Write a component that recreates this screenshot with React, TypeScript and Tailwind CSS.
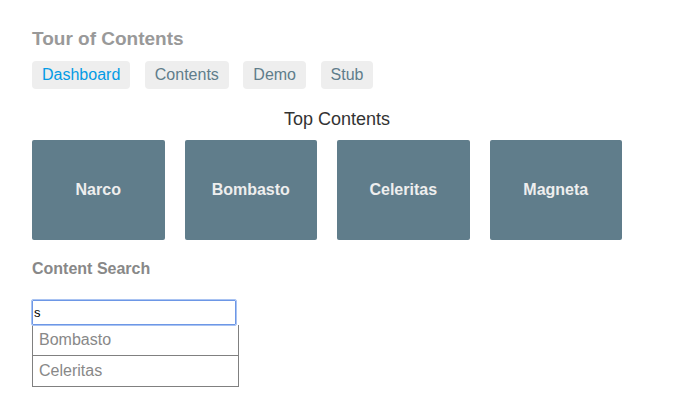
import { useState } from 'react';

const navLinks = ['Dashboard', 'Contents', 'Demo', 'Stub'];
const topContents = ['Narco', 'Bombasto', 'Celeritas', 'Magneta'];
const allContents = ['Narco', 'Bombasto', 'Celeritas', 'Magneta', 'RubberMan', 'Dynama', 'Dr IQ', 'Magma', 'Tornado'];

export default function App() {
  const [term, setTerm] = useState('s');

  // 検索語を含むもの（先頭2件だけ表示）
  const results = term
    ? allContents.filter((name) => name.toLowerCase().includes(term.toLowerCase()) && name !== 'Magneta').slice(0, 2)
    : [];

  return (
    <div className="min-h-[399px] bg-white pl-8 pr-[31px] pt-[28px] font-['Liberation_Sans',Arial,sans-serif]">
      <h1 className="text-[19px] leading-[22px] font-bold text-[#999]">Tour of Contents</h1>

      {/* ナビゲーション */}
      <nav className="mt-[11px] flex gap-[14.5px]">
        {navLinks.map((link, i) => (
          <a
            key={link}
            href="#"
            className={`rounded-[4px] bg-[#eee] px-[10px] py-[5px] text-[16px] leading-[18px] ${
              i === 0 ? 'text-[#039be5]' : 'text-[#607d8b]'
            }`}
          >
            {link}
          </a>
        ))}
      </nav>

      <h3 className="mt-[19px] text-center text-[18px] leading-[22px] text-[#333]">Top Contents</h3>

      {/* トップのタイル */}
      <div className="mt-[10px] grid grid-cols-4">
        {topContents.map((name) => (
          <div key={name} className="pr-5">
            <div className="flex h-[100px] items-center justify-center rounded-[2px] bg-[#607d8b] text-[16px] leading-[18px] font-bold text-[#eee]">
              {name}
            </div>
          </div>
        ))}
      </div>

      {/* 検索 */}
      <div className="mt-[20px]">
        <h4 className="text-[16px] leading-[18px] font-bold text-[#888]">Content Search</h4>
        <input
          value={term}
          onChange={(e) => setTerm(e.target.value)}
          className="mt-[22px] block h-[25px] w-[204px] rounded-[1px] border border-[#6d97e6] px-[1px] text-[13px] text-black outline outline-1 outline-[#a9c3f2] font-['Liberation_Sans',Arial,sans-serif]"
        />
        <ul className="w-[207px]">
          {results.map((name) => (
            <li
              key={name}
              className="border-x border-b border-[#808080] px-[6px] py-[6px] text-[16px] leading-[18px] text-[#888]"
            >
              {name}
            </li>
          ))}
        </ul>
      </div>
    </div>
  );
}
